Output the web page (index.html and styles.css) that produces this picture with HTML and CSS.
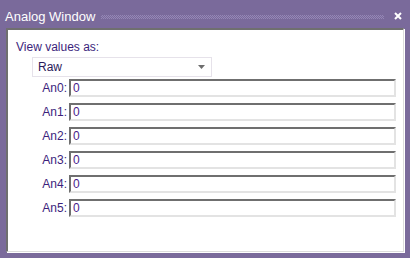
FILE: index.html
```html
<!DOCTYPE html>
<html>
<head>
<title>Analog Window</title>
<link rel="stylesheet" href="styles.css">
</head>
<body>
<div class="window">
  <div class="titlebar">
    <span class="title">Analog Window</span>
    <span class="grip"></span>
    <svg class="close" width="8" height="8" viewBox="0 0 8 8"><path d="M1 1l6 6M7 1l-6 6" stroke="#fff" stroke-width="2"/></svg>
  </div>
  <div class="panel">
    <div class="viewlabel">View values as:</div>
    <div class="combo">
      <span>Raw</span>
      <svg width="7" height="4" viewBox="0 0 7 4"><path d="M0 0h7L3.5 4z" fill="#6d6d6d"/></svg>
    </div>
    <div class="rows">
      <div class="row"><label>An0:</label><div class="field">0</div></div>
      <div class="row"><label>An1:</label><div class="field">0</div></div>
      <div class="row"><label>An2:</label><div class="field">0</div></div>
      <div class="row"><label>An3:</label><div class="field">0</div></div>
      <div class="row"><label>An4:</label><div class="field">0</div></div>
      <div class="row"><label>An5:</label><div class="field">0</div></div>
    </div>
  </div>
</div>
</body>
</html>
```
FILE: styles.css
```css
html, body {
  margin: 0;
  padding: 0;
}
body {
  font-family: "Liberation Sans", Arial, sans-serif;
  font-size: 12px;
  background: #7a6a9b;
}
.window {
  width: 410px;
  height: 258px;
  background: #7a6a9b;
  box-sizing: border-box;
  padding: 0 6px 6px 6px;
  display: flex;
  flex-direction: column;
}
.titlebar {
  height: 28px;
  display: flex;
  align-items: center;
  padding-top: 4px;
  box-sizing: border-box;
  margin-left: -1px;
}
.title {
  color: #fff;
  font-size: 13px;
}
/* dotted grip between title and close button */
.grip {
  flex: 1;
  height: 4px;
  margin: 1px 10px 0 6px;
  background-image: conic-gradient(#9587b6 25%, transparent 0 50%, #9587b6 0 75%, transparent 0);
  background-size: 2px 2px;
}
.close {
  margin-right: 2px;
}
.panel {
  flex: 1;
  background: #fff;
  border-top: 2px solid #6f6f6f;
  border-left: 2px solid #6f6f6f;
  border-right: 1px solid #dcdcdc;
  border-bottom: 1px solid #dcdcdc;
  box-shadow: inset -1px -1px 0 #fff, 1px 1px 0 #fff;
  padding: 10px 0 0 8px;
  color: #3c1f7c;
}
.viewlabel {
  line-height: 14px;
  color: #3c1f7c;
}
.combo {
  margin: 3px 0 0 16px;
  width: 180px;
  height: 20px;
  box-sizing: border-box;
  border: 1px solid #e6e2ea;
  display: flex;
  align-items: center;
  justify-content: space-between;
  padding: 0 6px 0 5px;
  color: #2a1a5a;
}
.rows {
  display: flex;
  flex-direction: column;
  gap: 6px;
  margin-top: 2px;
}
.row {
  display: flex;
  align-items: center;
}
.row label {
  width: 51px;
  text-align: right;
  padding-right: 2px;
  color: #3c1f7c;
}
.field {
  width: 327px;
  height: 18px;
  box-sizing: border-box;
  border-top: 2px solid #6f6f6f;
  border-left: 2px solid #6f6f6f;
  border-right: 2px solid #e3e3e3;
  border-bottom: 2px solid #e3e3e3;
  padding-left: 2px;
  line-height: 14px;
  color: #4a1a8a;
}
```
